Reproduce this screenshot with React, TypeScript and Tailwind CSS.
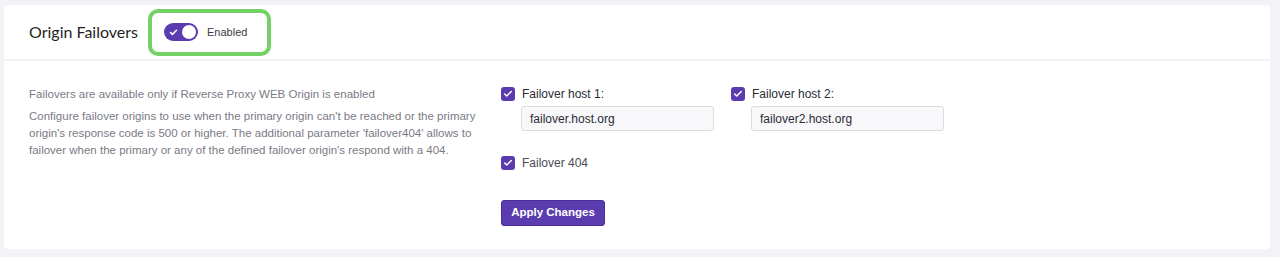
import { Check } from "lucide-react";

function Box({ label, bold }: { label: string; bold?: boolean }) {
  return (
    <label className="flex h-[14px] items-center gap-[7px] leading-[14px]">
      <span className="flex h-[14px] w-[14px] items-center justify-center rounded-[3px] bg-[#5b3cb0]">
        <Check className="h-[10px] w-[10px] text-white" strokeWidth={3.5} />
      </span>
      <span className={bold ? "text-[12px] font-medium text-[#2b2b33]" : "text-[12px] text-[#4a4a52]"}>
        {label}
      </span>
    </label>
  );
}

function HostField({ label, value }: { label: string; value: string }) {
  return (
    <div className="flex w-[230px] flex-col">
      <Box label={label} bold />
      <div className="ml-[20px] mt-[5px] flex h-[25px] w-[193px] items-center rounded-[3px] border border-[#dcdce0] bg-[#f8f8fa] px-[8px] text-[12px] text-[#2b2b33]">
        {value}
      </div>
    </div>
  );
}

export default function App() {
  return (
    <div className="h-[257px] bg-[#f2f2f7] pl-[4px] pr-[10px] pt-[5px]" style={{ fontFamily: "'Liberation Sans', Arial, sans-serif" }}>
      <div className="h-[244px] rounded-[4px] bg-white">
        {/* Header */}
        <div className="flex h-[56px] items-center border-b-2 border-[#f2f2f5] pl-[25px]">
          <h2 className="text-[16px] text-[#1f1f24]" style={{ fontFamily: "Lato, sans-serif" }}>
            Origin Failovers
          </h2>
          <div className="ml-[10px] flex h-[47px] items-center gap-[9px] rounded-[10px] border-4 border-[#74d165] pl-[12px] pr-[20px]">
            <span className="relative flex h-[18px] w-[34px] items-center rounded-full bg-[#5b3cb0] pl-[5px]">
              <Check className="h-[9px] w-[9px] text-white" strokeWidth={4} />
              <span className="absolute right-[2px] top-[2px] h-[14px] w-[14px] rounded-full bg-white" />
            </span>
            <span className="text-[11px] text-[#3b3b44]">Enabled</span>
          </div>
        </div>

        {/* Body */}
        <div className="flex pl-[25px] pt-[26px]">
          <div className="w-[472px] text-[11.5px] leading-[17px] text-[#7a7a85]">
            <p className="-mt-[1px]">Failovers are available only if Reverse Proxy WEB Origin is enabled</p>
            <p className="mt-[5px] whitespace-nowrap">
              Configure failover origins to use when the primary origin can't be reached or the primary
              <br />
              origin's response code is 500 or higher. The additional parameter 'failover404' allows to
              <br />
              failover when the primary or any of the defined failover origin's respond with a 404.
            </p>
          </div>
          <div className="flex flex-col">
            <div className="flex">
              <HostField label="Failover host 1:" value="failover.host.org" />
              <HostField label="Failover host 2:" value="failover2.host.org" />
            </div>
            <div className="mt-[25px]">
              <Box label="Failover 404" />
            </div>
            <button className="mt-[30px] h-[26px] w-[104px] rounded-[3px] border border-[#4a2f96] bg-[#5a3cae] text-[11.5px] font-bold text-white">
              Apply Changes
            </button>
          </div>
        </div>
      </div>
    </div>
  );
}
